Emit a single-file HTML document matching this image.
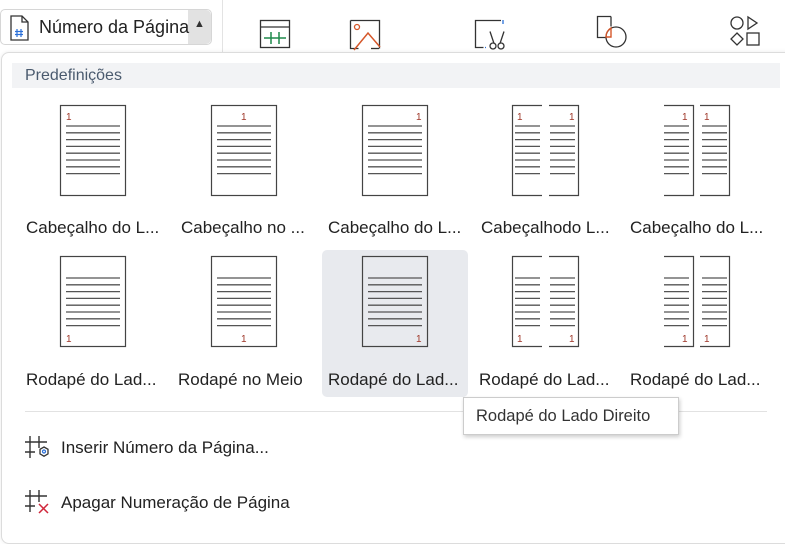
<!DOCTYPE html>
<html><head><meta charset="utf-8"><style>
body{margin:0;width:785px;height:526px;background:#fff;font-family:"Liberation Sans",sans-serif;position:relative;overflow:hidden;color:#222}
.abs{position:absolute}
.lbl{position:absolute;font-size:16.5px;color:#222;white-space:nowrap}
</style></head><body>
<div class="abs" style="left:0;top:9px;width:210px;height:34px;border:1px solid #d6d6d6;border-radius:5px;background:#fff"></div>
<div class="abs" style="left:188px;top:10px;width:23px;height:34px;background:#e2e2e2;border-radius:0 5px 5px 0"></div>
<div class="abs" style="left:194px;top:18px;font-size:11px;color:#333">&#9650;</div>
<svg class="abs" style="left:8px;top:14px" width="24" height="28" viewBox="0 0 24 28"><path d="M3 2h11l6 6v18H3z" fill="none" stroke="#333" stroke-width="1.3"/><path d="M14 2v6h6" fill="none" stroke="#333" stroke-width="1.3"/><path d="M9 15v8M13 15v8M7 17.5h8M7 20.5h8" stroke="#2a6fd8" stroke-width="1.2"/></svg>
<div class="lbl" style="left:39px;top:17px;font-size:18px">Número da Página</div>
<div class="abs" style="left:222px;top:0;width:1px;height:54px;background:#e3e3e3"></div>
<svg class="abs" style="left:259px;top:19px" width="34" height="32"><rect x="1.5" y="1.5" width="29" height="27" fill="none" stroke="#333" stroke-width="1.3"/><path d="M1.5 8h29" stroke="#333" stroke-width="1.2"/><path d="M5 19h22M12 13v12M20 13v12" stroke="#1f8a4c" stroke-width="1.5"/></svg>
<svg class="abs" style="left:349px;top:19px" width="34" height="32"><path d="M1.5 1.5h29v28" fill="none" stroke="#333" stroke-width="1.3"/><path d="M1.5 1.5v28h8" fill="none" stroke="#333" stroke-width="1.3"/><path d="M22 29.5h8" stroke="#333" stroke-width="1.3"/><circle cx="8" cy="8" r="2.5" fill="none" stroke="#d5572a" stroke-width="1.3"/><path d="M5 31l14-17 12 14" fill="none" stroke="#d5572a" stroke-width="1.5"/></svg>
<svg class="abs" style="left:474px;top:19px" width="36" height="32"><path d="M27 1.5H1.5v27h8" fill="none" stroke="#333" stroke-width="1.3"/><path d="M29 1v4" stroke="#2a6fd8" stroke-width="1.3"/><path d="M11 28.5h1" stroke="#2a6fd8" stroke-width="1.3"/><circle cx="19" cy="27" r="3" fill="none" stroke="#333" stroke-width="1.3"/><circle cx="27" cy="27" r="3" fill="none" stroke="#333" stroke-width="1.3"/><path d="M20 24.5l-4-12M26 24.5l4-12" stroke="#333" stroke-width="1.3"/></svg>
<svg class="abs" style="left:596px;top:15px" width="34" height="36"><path d="M15 1.5H1.5v21h9" fill="none" stroke="#333" stroke-width="1.3"/><path d="M15 1.5v10" stroke="#333" stroke-width="1.3"/><circle cx="20" cy="22" r="10" fill="none" stroke="#333" stroke-width="1.3"/><path d="M15 13v9h-5a10 10 0 0 1 5-9z" fill="none" stroke="#d5572a" stroke-width="1.4"/></svg>
<svg class="abs" style="left:728px;top:14px" width="34" height="36"><circle cx="9" cy="9" r="6" fill="none" stroke="#333" stroke-width="1.3"/><path d="M20 3v12l9-6z" fill="none" stroke="#333" stroke-width="1.3"/><path d="M9 19l6 6-6 6-6-6z" fill="none" stroke="#333" stroke-width="1.3"/><rect x="19" y="19" width="12" height="12" fill="none" stroke="#333" stroke-width="1.3"/></svg>
<div class="abs" style="left:1px;top:52px;width:800px;height:490px;background:#fff;border:1px solid #dcdcdc;border-radius:8px;box-shadow:0 0 4px rgba(0,0,0,.08)"></div>
<div class="abs" style="left:12px;top:63px;width:768px;height:25px;background:#f2f3f5"></div>
<div class="lbl" style="left:25px;top:67px;font-size:16px;color:#4a5a6e">Predefinições</div>
<div class="abs" style="left:322px;top:250px;width:146px;height:147px;background:#e8eaee;border-radius:5px"></div>
<svg class="abs" style="left:0;top:0" width="785" height="400">
<defs>
<g id="ln"><path d="M0 0h54M0 6.8h54M0 13.6h54M0 20.4h54M0 27.2h54M0 34h54M0 40.8h54M0 47.6h54" stroke="#555" stroke-width="1.3"/></g>
<g id="ln2"><path d="M0 0h25M0 6.8h25M0 13.6h25M0 20.4h25M0 27.2h25M0 34h25M0 40.8h25M0 47.6h25" stroke="#555" stroke-width="1.3"/></g>
</defs>
<g fill="none" stroke="#444" stroke-width="1.2">
<rect x="60.5" y="105.5" width="65" height="90"/><rect x="211.5" y="105.5" width="65" height="90"/><rect x="362.5" y="105.5" width="65" height="90"/>
<rect x="60.5" y="256.5" width="65" height="90"/><rect x="211.5" y="256.5" width="65" height="90"/><rect x="362.5" y="256.5" width="65" height="90" fill="#e8eaee"/>
<path d="M542 105.5h-29.5v90H542M549 105.5h29.5v90H549"/>
<path d="M664 105.5h29.5v90H664M700 105.5h29.5v90H700"/>
<path d="M542 256.5h-29.5v90H542M549 256.5h29.5v90H549"/>
<path d="M664 256.5h29.5v90H664M700 256.5h29.5v90H700"/>
</g>
<use href="#ln" x="66" y="126"/><use href="#ln" x="217" y="126"/><use href="#ln" x="368" y="126"/>
<use href="#ln" x="66" y="278"/><use href="#ln" x="217" y="278"/><use href="#ln" x="368" y="278"/>
<use href="#ln2" x="515" y="126"/><use href="#ln2" x="550" y="126"/><use href="#ln2" x="664" y="126"/><use href="#ln2" x="702" y="126"/>
<use href="#ln2" x="515" y="278"/><use href="#ln2" x="550" y="278"/><use href="#ln2" x="664" y="278"/><use href="#ln2" x="702" y="278"/>
<g fill="#a0382a" font-family="Liberation Sans" font-size="10">
<text x="66" y="120">1</text><text x="241" y="120">1</text><text x="416" y="120">1</text>
<text x="66" y="342">1</text><text x="241" y="342">1</text><text x="416" y="342">1</text>
<text x="517" y="120">1</text><text x="569" y="120">1</text><text x="682" y="120">1</text><text x="704" y="120">1</text>
<text x="517" y="342">1</text><text x="569" y="342">1</text><text x="682" y="342">1</text><text x="704" y="342">1</text>
</g>
</svg>
<div class="lbl" style="left:26px;top:218px;font-size:17px">Cabeçalho do L...</div>
<div class="lbl" style="left:181px;top:218px;font-size:17px">Cabeçalho no ...</div>
<div class="lbl" style="left:328px;top:218px;font-size:17px">Cabeçalho do L...</div>
<div class="lbl" style="left:481px;top:218px;font-size:17px">Cabeçalhodo L...</div>
<div class="lbl" style="left:630px;top:218px;font-size:17px">Cabeçalho do L...</div>
<div class="lbl" style="left:26px;top:370px;font-size:17px">Rodapé do Lad...</div>
<div class="lbl" style="left:178px;top:370px;font-size:17px">Rodapé no Meio</div>
<div class="lbl" style="left:328px;top:370px;font-size:17px">Rodapé do Lad...</div>
<div class="lbl" style="left:479px;top:370px;font-size:17px">Rodapé do Lad...</div>
<div class="lbl" style="left:630px;top:370px;font-size:17px">Rodapé do Lad...</div>
<div class="abs" style="left:25px;top:411px;width:742px;height:1px;background:#e2e2e2"></div>
<div class="abs" style="left:463px;top:397px;width:214px;height:36px;background:#fff;border:1px solid #ccc;box-shadow:1px 2px 4px rgba(0,0,0,.2)"></div>
<div class="lbl" style="left:476px;top:407px;font-size:16.5px;color:#333">Rodapé do Lado Direito</div>
<svg class="abs" style="left:24px;top:435px" width="28" height="26"><path d="M6 1v22M15 1v12M1 7h22M1 17h10" stroke="#333" stroke-width="1.4"/><path d="M20 12l4 2.3v4.6l-4 2.3-4-2.3v-4.6z" fill="none" stroke="#333" stroke-width="1.3"/><circle cx="20" cy="16.5" r="1.5" fill="none" stroke="#2a6fd8" stroke-width="1.2"/></svg>
<div class="lbl" style="left:61px;top:438px;font-size:17px">Inserir Número da Página...</div>
<svg class="abs" style="left:24px;top:489px" width="28" height="26"><path d="M6 1v22M15 1v12M1 7h22M1 17h10" stroke="#333" stroke-width="1.4"/><path d="M15 15l9 9M24 15l-9 9" stroke="#d0283c" stroke-width="1.5"/></svg>
<div class="lbl" style="left:61px;top:493px;font-size:17px">Apagar Numeração de Página</div>
</body></html>
